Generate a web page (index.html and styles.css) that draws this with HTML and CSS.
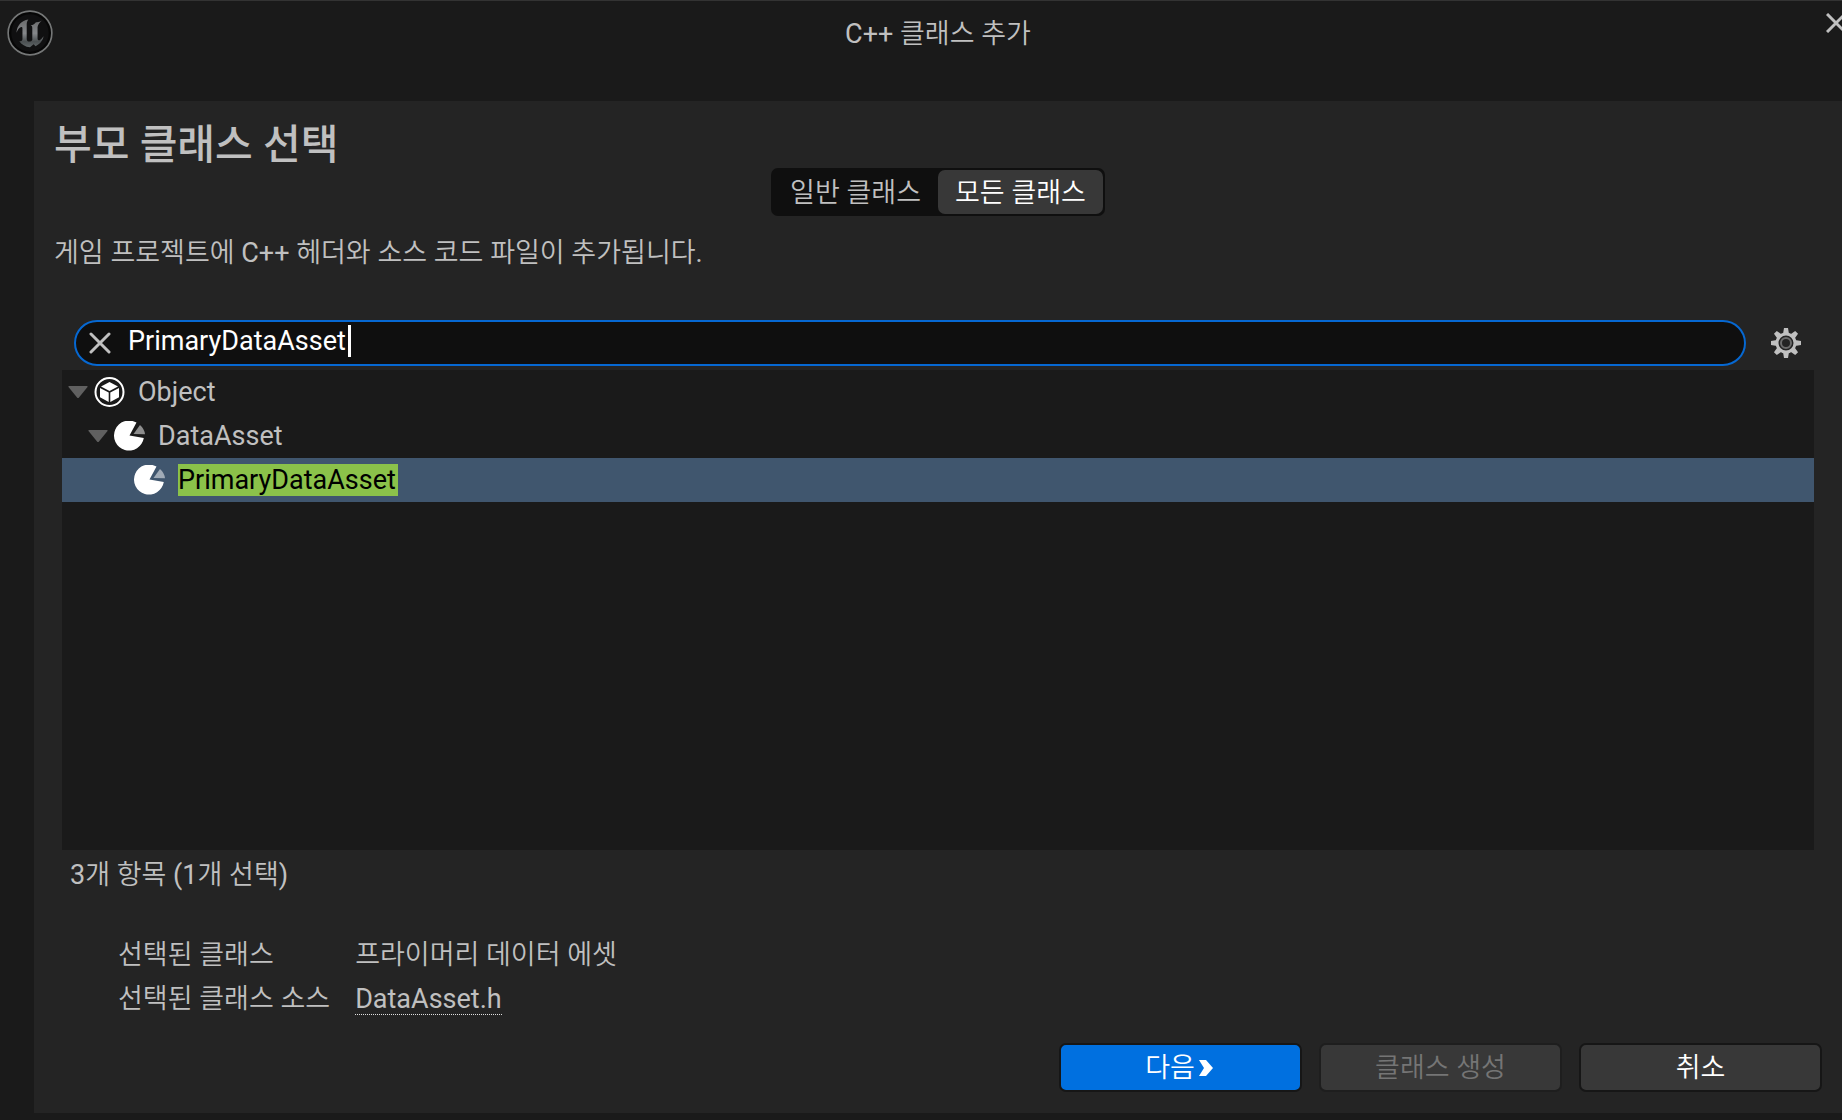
FILE: index.html
```html
<!DOCTYPE html>
<html lang="ko">
<head>
<meta charset="utf-8">
<title>C++ 클래스 추가</title>
<link rel="stylesheet" href="styles.css">
</head>
<body>
<div class="window">
  <header class="titlebar">
    <svg class="logo" viewBox="20 28 140 140" aria-hidden="true">
      <defs>
        <linearGradient id="metal" x1="0" y1="0" x2="0" y2="1">
          <stop offset="0" stop-color="#6a6b6c"/>
          <stop offset="0.5" stop-color="#85878a"/>
          <stop offset="0.8" stop-color="#4b5052"/>
          <stop offset="1" stop-color="#606668"/>
        </linearGradient>
      </defs>
      <circle cx="90" cy="98" r="66.500" fill="#060606" stroke="#757777" stroke-width="5"/>
      <circle cx="90" cy="98" r="57" fill="#101011"/>
      <path fill="url(#metal)" d="M49 97C50 76 64 60 85 57C81 62 80 67 80 73V116C80 121 83 124 88 124C92 124 95 122 97 119V83C97 78 95 76 92 74C100 74 105 69 108 65C115 66 121 63 126 60C120 66 114 72 113 80V115C113 119 115 121 118 121C123 119 128 113 131 108C130 120 120 132 107 138L101 132L90 141C76 140 64 133 57 122C62 124 67 122 67 116V84C67 81 66 80 63 80C57 82 52 89 49 97Z"/>
    </svg>
    <h1 class="window-title">C++ 클래스 추가</h1>
    <button class="close" type="button" aria-label="닫기">
      <svg viewBox="0 0 20 20" aria-hidden="true"><path d="M1 1L19 19M19 1L1 19" stroke="#c0c0c0" stroke-width="3" fill="none"/></svg>
    </button>
  </header>

  <main class="panel">
    <h2 class="heading">부모 클래스 선택</h2>
    <div class="segmented">
      <button class="segment" type="button" aria-pressed="false">일반 클래스</button>
      <button class="segment segment-active" type="button" aria-pressed="true">모든 클래스</button>
    </div>
    <p class="description">게임 프로젝트에 C++ 헤더와 소스 코드 파일이 추가됩니다.</p>

    <div class="search-row">
      <div class="search">
        <button class="clear" type="button" aria-label="지우기">
          <svg viewBox="0 0 22 22" aria-hidden="true"><path d="M2 2L20 20M20 2L2 20" stroke="#c0c0c0" stroke-width="3" stroke-linecap="round" fill="none"/></svg>
        </button>
        <input class="search-input" type="text" value="PrimaryDataAsset" aria-label="클래스 검색">
        <span class="caret"></span>
      </div>
      <button class="settings" type="button" aria-label="설정">
        <svg viewBox="-15 -15 30 30" aria-hidden="true">
          <g fill="#c0c0c0">
            <path id="teeth" d="M-2-15H2L3-9H-3ZM-2 15H2L3 9H-3ZM-15-2V2L-9 3V-3ZM15-2V2L9 3V-3Z"/>
            <use href="#teeth" transform="rotate(45)"/>
          </g>
          <circle r="9" fill="#242424" stroke="#c0c0c0" stroke-width="3"/>
          <circle r="5" fill="none" stroke="#6c6c6c" stroke-width="2"/>
        </svg>
      </button>
    </div>

    <ul class="tree" role="tree">
      <li class="node" role="treeitem" aria-expanded="true">
        <svg class="arrow" viewBox="0 0 20 12" aria-hidden="true"><path d="M1 0H19Q20 0 19.500 1L11 11.500Q10 12.500 9 11.500L.5 1Q0 0 1 0Z" fill="#606060"/></svg>
        <svg class="node-icon" viewBox="0 0 30 30" aria-hidden="true">
          <circle cx="15" cy="15" r="14" fill="none" stroke="#fff" stroke-width="2"/>
          <path fill="#fff" d="M15 5L23.500 9.500L15 14L6.500 9.500ZM5.500 11L14.200 15.600V25L5.500 20.300ZM24.500 11L15.800 15.600V25L24.500 20.300Z"/>
        </svg>
        <span class="node-name">Object</span>
      </li>
      <li class="node node-level-2" role="treeitem" aria-expanded="true">
        <svg class="arrow" viewBox="0 0 20 12" aria-hidden="true"><path d="M1 0H19Q20 0 19.500 1L11 11.500Q10 12.500 9 11.500L.5 1Q0 0 1 0Z" fill="#606060"/></svg>
        <svg class="node-icon" viewBox="0 0 31 30" aria-hidden="true">
          <path fill="#fff" d="M22.500 1.600A15 15 0 1 0 29.800 17L15.500 14.500Z"/>
          <path fill="#fff" fill-opacity=".5" d="M26 4Q30.500 8 31 13.300L19.500 13Z"/>
        </svg>
        <span class="node-name">DataAsset</span>
      </li>
      <li class="node node-level-3 node-selected" role="treeitem" aria-selected="true">
        <svg class="node-icon" viewBox="0 0 31 30" aria-hidden="true">
          <path fill="#fff" d="M22.500 1.600A15 15 0 1 0 29.800 17L15.500 14.500Z"/>
          <path fill="#fff" fill-opacity=".5" d="M26 4Q30.500 8 31 13.300L19.500 13Z"/>
        </svg>
        <mark class="node-name match">PrimaryDataAsset</mark>
      </li>
    </ul>
    <p class="count">3개 항목 (1개 선택)</p>

    <dl class="details">
      <dt>선택된 클래스</dt>
      <dd>프라이머리 데이터 에셋</dd>
      <dt>선택된 클래스 소스</dt>
      <dd><a class="source" href="#">DataAsset.h</a></dd>
    </dl>

    <footer class="actions">
      <button class="action action-primary" type="button">다음<svg class="chevron" viewBox="0 0 14 16" aria-hidden="true"><path d="M0 0H7L14 8L7 16H0L5 8Z" fill="#fff"/></svg></button>
      <button class="action" type="button" disabled>클래스 생성</button>
      <button class="action" type="button">취소</button>
    </footer>
  </main>
</div>
</body>
</html>
```
FILE: styles.css
```css
* {
  box-sizing: border-box;
  margin: 0;
  padding: 0;
}

body {
  background: #1a1a1a;
  color: #c0c0c0;
  font: 400 27px/36px Roboto, "Noto Sans CJK KR DemiLight", "Noto Sans CJK KR", sans-serif;
  overflow: hidden;
}

button,
input {
  border: 0;
  background: none;
  color: inherit;
  font: inherit;
}

svg {
  display: block;
}

/* The dialog runs past the right edge of the screen by one gutter. */
.window {
  display: flex;
  flex-direction: column;
  min-height: 100vh;
  margin-right: -34px;
  padding-bottom: 7px;
  border-top: 1px solid #333;
}

.titlebar {
  display: grid;
  grid-template-columns: 1fr auto 1fr;
  align-items: start;
  height: 100px;
  padding: 9px 30px 0 7px;
}

.logo {
  width: 46px;
  height: 46px;
}

.window-title {
  padding-top: 6px;
  padding-left: 23px;
  font-size: 27px;
  font-weight: 400;
}

.close {
  justify-self: end;
  padding-top: 3px;
}

.close svg {
  width: 20px;
  height: 20px;
}

.panel {
  display: flex;
  flex: 1;
  flex-direction: column;
  margin: 0 34px;
  padding: 22px 20px 21px;
  background: #242424;
}

.heading {
  font-family: Roboto, "Noto Sans CJK KR", sans-serif;
  font-size: 41px;
  font-weight: 500;
  line-height: 45px;
}

.segmented {
  display: flex;
  align-self: center;
  height: 48px;
  padding: 2px;
  border-radius: 7px;
  background: #0f0f0f;
}

.segment {
  padding: 2px 17px 0;
  border-radius: 7px;
}

.segment-active {
  background: #383838;
  color: #fff;
}

.description {
  margin-top: 19px;
}

.search-row {
  display: flex;
  align-items: center;
  gap: 25px;
  margin: 49px 21px 4px 20px;
}

.search {
  display: flex;
  flex: 1;
  align-items: center;
  height: 46px;
  padding: 0 13px;
  border: 2px solid #0668d2;
  border-radius: 23px;
  background: #0f0f0f;
}

.clear svg {
  width: 22px;
  height: 22px;
}

.search-input {
  field-sizing: content;
  height: 36px;
  margin: 0 2px 4px 17px;
  outline: none;
  color: #fff;
}

.caret {
  width: 3px;
  height: 32px;
  margin-bottom: 4px;
  background: #fff;
}

.settings svg {
  width: 30px;
  height: 30px;
}

.tree {
  flex: 1;
  min-height: 132px;
  margin: 0 8px;
  background: #1a1a1a;
  list-style: none;
}

.node {
  display: flex;
  align-items: center;
  height: 44px;
  padding-left: 6px;
}

.node-level-2 {
  padding-left: 26px;
}

.node-level-3 {
  padding-left: 72px;
}

.node-selected {
  background: #40566e;
}

.arrow {
  width: 20px;
  height: 12px;
  margin-right: 6px;
}

.node-icon {
  width: 31px;
  height: 30px;
}

.node-name {
  margin-left: 13px;
  line-height: 32px;
}

.match {
  padding-right: 2px;
  background: #8bc24a;
  color: #000;
}

.count {
  margin: 7px 16px 40px;
}

.details {
  display: grid;
  grid-template-columns: max-content 1fr;
  column-gap: 25px;
  padding-left: 64px;
  line-height: 44px;
}

.source {
  display: inline-block;
  border-bottom: 1px dotted #e0e0e0;
  color: inherit;
  line-height: 30px;
  text-decoration: none;
}

.actions {
  display: flex;
  justify-content: flex-end;
  gap: 17px;
  margin-top: 22px;
}

.action {
  display: flex;
  align-items: center;
  justify-content: center;
  width: 243px;
  height: 49px;
  border: 2px solid #161616;
  border-radius: 7px;
  background: #383838;
  color: #fff;
}

.action:disabled {
  border-color: #1e1e1e;
  color: #757575;
}

.action-primary {
  padding-right: 3px;
  background: #0070e0;
}

.chevron {
  width: 14px;
  height: 16px;
  margin-left: 4px;
}
```
